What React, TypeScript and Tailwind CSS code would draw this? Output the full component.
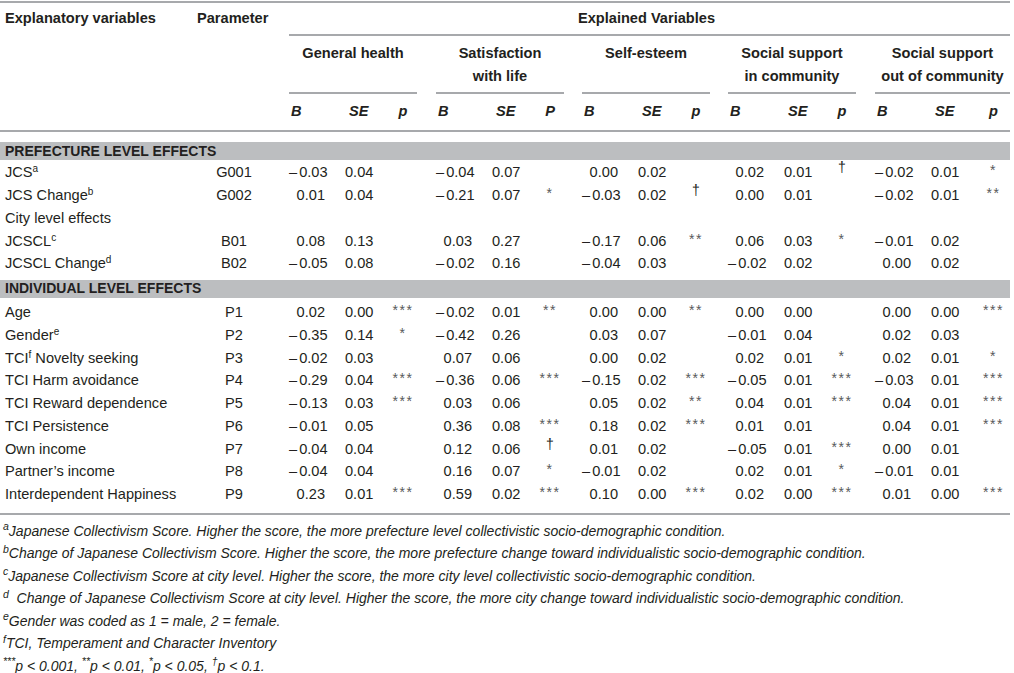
import React, { Fragment } from "react";

type Cell = [string, string, string];

const G = [
  { b: "w-[38px]", se: "w-[62px]", p: "w-[28px]", gap: "w-[19px]", span: "w-[128px]" },
  { b: "w-[38px]", se: "w-[62px]", p: "w-[28px]", gap: "w-[18px]", span: "w-[128px]" },
  { b: "w-[38px]", se: "w-[62px]", p: "w-[28px]", gap: "w-[18px]", span: "w-[128px]" },
  { b: "w-[38px]", se: "w-[62px]", p: "w-[28px]", gap: "w-[19px]", span: "w-[128px]" },
  { b: "w-[38px]", se: "w-[64px]", p: "w-[33px]", gap: "w-0", span: "w-[135px]" },
];

const groupTitles: React.ReactNode[] = [
  <>General health</>,
  <>
    Satisfaction
    <br />
    with life
  </>,
  <>Self-esteem</>,
  <>
    Social support
    <br />
    in community
  </>,
  <>
    Social support
    <br />
    out of community
  </>,
];

function Sig({ v }: { v: string }) {
  if (!v) return null;
  if (v === "†")
    return (
      <span className="inline-block -translate-y-[5px] text-[14px] leading-none text-[#231f20]">†</span>
    );
  return (
    <span className="inline-block -translate-y-[2px] text-[14px] leading-none tracking-[1.5px] text-[#58595b]">
      {v}
    </span>
  );
}

function Num({ v }: { v: string }) {
  if (v.startsWith("-")) {
    return (
      <>
        <span className="mr-[2px]">{"\u2013"}</span>
        {v.slice(1)}
      </>
    );
  }
  return <>{v}</>;
}

function DataRow({ label, param, vals }: { label: React.ReactNode; param: string; vals: Cell[] }) {
  return (
    <div className="flex h-[22.75px] items-center whitespace-nowrap">
      <div className="w-[195px] pl-[5px]">{label}</div>
      <div className="w-[94px] pr-[16px] text-center">{param}</div>
      {G.map((g, i) => (
        <Fragment key={i}>
          <div className={`${g.b} pr-[2px] text-right`}>
            <Num v={vals[i][0]} />
          </div>
          <div className={`${g.se} pl-[18px]`}>{vals[i][1]}</div>
          <div className={`${g.p} text-center`}>
            <Sig v={vals[i][2]} />
          </div>
          <div className={g.gap} />
        </Fragment>
      ))}
    </div>
  );
}

const S = ({ c }: { c: string }) => <sup className="text-[10px]">{c}</sup>;

const prefRows: { label: React.ReactNode; param: string; vals: Cell[] }[] = [
  {
    label: (
      <>
        JCS<S c="a" />
      </>
    ),
    param: "G001",
    vals: [
      ["-0.03", "0.04", ""],
      ["-0.04", "0.07", ""],
      ["0.00", "0.02", ""],
      ["0.02", "0.01", "†"],
      ["-0.02", "0.01", "*"],
    ],
  },
  {
    label: (
      <>
        JCS Change<S c="b" />
      </>
    ),
    param: "G002",
    vals: [
      ["0.01", "0.04", ""],
      ["-0.21", "0.07", "*"],
      ["-0.03", "0.02", "†"],
      ["0.00", "0.01", ""],
      ["-0.02", "0.01", "**"],
    ],
  },
];

const cityRows: { label: React.ReactNode; param: string; vals: Cell[] }[] = [
  {
    label: (
      <>
        JCSCL<S c="c" />
      </>
    ),
    param: "B01",
    vals: [
      ["0.08", "0.13", ""],
      ["0.03", "0.27", ""],
      ["-0.17", "0.06", "**"],
      ["0.06", "0.03", "*"],
      ["-0.01", "0.02", ""],
    ],
  },
  {
    label: (
      <>
        JCSCL Change<S c="d" />
      </>
    ),
    param: "B02",
    vals: [
      ["-0.05", "0.08", ""],
      ["-0.02", "0.16", ""],
      ["-0.04", "0.03", ""],
      ["-0.02", "0.02", ""],
      ["0.00", "0.02", ""],
    ],
  },
];

const indRows: { label: React.ReactNode; param: string; vals: Cell[] }[] = [
  {
    label: "Age",
    param: "P1",
    vals: [
      ["0.02", "0.00", "***"],
      ["-0.02", "0.01", "**"],
      ["0.00", "0.00", "**"],
      ["0.00", "0.00", ""],
      ["0.00", "0.00", "***"],
    ],
  },
  {
    label: (
      <>
        Gender<S c="e" />
      </>
    ),
    param: "P2",
    vals: [
      ["-0.35", "0.14", "*"],
      ["-0.42", "0.26", ""],
      ["0.03", "0.07", ""],
      ["-0.01", "0.04", ""],
      ["0.02", "0.03", ""],
    ],
  },
  {
    label: (
      <>
        TCI<S c="f" /> Novelty seeking
      </>
    ),
    param: "P3",
    vals: [
      ["-0.02", "0.03", ""],
      ["0.07", "0.06", ""],
      ["0.00", "0.02", ""],
      ["0.02", "0.01", "*"],
      ["0.02", "0.01", "*"],
    ],
  },
  {
    label: "TCI Harm avoidance",
    param: "P4",
    vals: [
      ["-0.29", "0.04", "***"],
      ["-0.36", "0.06", "***"],
      ["-0.15", "0.02", "***"],
      ["-0.05", "0.01", "***"],
      ["-0.03", "0.01", "***"],
    ],
  },
  {
    label: "TCI Reward dependence",
    param: "P5",
    vals: [
      ["-0.13", "0.03", "***"],
      ["0.03", "0.06", ""],
      ["0.05", "0.02", "**"],
      ["0.04", "0.01", "***"],
      ["0.04", "0.01", "***"],
    ],
  },
  {
    label: "TCI Persistence",
    param: "P6",
    vals: [
      ["-0.01", "0.05", ""],
      ["0.36", "0.08", "***"],
      ["0.18", "0.02", "***"],
      ["0.01", "0.01", ""],
      ["0.04", "0.01", "***"],
    ],
  },
  {
    label: "Own income",
    param: "P7",
    vals: [
      ["-0.04", "0.04", ""],
      ["0.12", "0.06", "†"],
      ["0.01", "0.02", ""],
      ["-0.05", "0.01", "***"],
      ["0.00", "0.01", ""],
    ],
  },
  {
    label: "Partner\u2019s income",
    param: "P8",
    vals: [
      ["-0.04", "0.04", ""],
      ["0.16", "0.07", "*"],
      ["-0.01", "0.02", ""],
      ["0.02", "0.01", "*"],
      ["-0.01", "0.01", ""],
    ],
  },
  {
    label: "Interdependent Happiness",
    param: "P9",
    vals: [
      ["0.23", "0.01", "***"],
      ["0.59", "0.02", "***"],
      ["0.10", "0.00", "***"],
      ["0.02", "0.00", "***"],
      ["0.01", "0.00", "***"],
    ],
  },
];

function Band({ children, className }: { children: React.ReactNode; className?: string }) {
  return (
    <div
      className={`flex h-[18px] w-[1010px] items-center bg-[#bcbec0] pl-[5px] text-[14px] font-bold ${className ?? ""}`}
    >
      {children}
    </div>
  );
}

export default function App() {
  return (
    <div
      className="h-[673px] w-[1014px] overflow-hidden bg-white text-[14.6px] text-[#231f20]"
      style={{ fontFamily: '"Liberation Sans", Arial, sans-serif' }}
    >
      {/* top rule */}
      <div className="mt-[1px] h-[2px] w-[1010px] bg-[#a7a9ac]" />

      {/* header row 1 */}
      <div className="flex h-[31px] items-center whitespace-nowrap font-bold">
        <div className="w-[195px] pl-[5px]">Explanatory variables</div>
        <div className="w-[94px] pl-[2px]">Parameter</div>
        <div className="w-[721px] pr-[6px] text-center">Explained Variables</div>
      </div>
      <div className="flex">
        <div className="w-[289px]" />
        <div className="h-[2px] w-[721px] bg-[#a7a9ac]" />
      </div>

      {/* group titles */}
      <div className="flex h-[58px] whitespace-nowrap font-bold">
        <div className="w-[289px]" />
        {G.map((g, i) => (
          <Fragment key={i}>
            <div className={`${g.span} border-b-2 border-[#a7a9ac] pt-[6px] text-center leading-[23px]`}>
              {groupTitles[i]}
            </div>
            <div className={g.gap} />
          </Fragment>
        ))}
      </div>

      {/* B SE p */}
      <div className="flex h-[36px] items-center whitespace-nowrap font-bold italic">
        <div className="w-[289px]" />
        {G.map((g, i) => (
          <Fragment key={i}>
            <div className={`${g.b} pl-[2px]`}>B</div>
            <div className={`${g.se} pl-[22px]`}>SE</div>
            <div className={`${g.p} text-center`}>{i === 1 ? "P" : "p"}</div>
            <div className={g.gap} />
          </Fragment>
        ))}
      </div>
      <div className="h-[2px] w-[1010px] bg-[#a7a9ac]" />

      {/* body */}
      <Band className="mt-[10px]">PREFECTURE LEVEL EFFECTS</Band>
      <div className="mt-[2px]">
        {prefRows.map((r, i) => (
          <DataRow key={i} {...r} />
        ))}
        <div className="flex h-[22.75px] items-center pl-[5px]">City level effects</div>
        {cityRows.map((r, i) => (
          <DataRow key={i} {...r} />
        ))}
      </div>
      <Band className="mt-[4px]">INDIVIDUAL LEVEL EFFECTS</Band>
      <div className="mt-[4px]">
        {indRows.map((r, i) => (
          <DataRow key={i} {...r} />
        ))}
      </div>
      <div className="mt-[6px] h-[2px] w-[1010px] bg-[#a7a9ac]" />

      {/* footnotes */}
      <div className="mt-[5px] pl-[3px] text-[14px] italic leading-[22.5px] whitespace-nowrap">
        <div>
          <sup>a</sup>Japanese Collectivism Score. Higher the score, the more prefecture level collectivistic
          socio-demographic condition.
        </div>
        <div>
          <sup>b</sup>Change of Japanese Collectivism Score. Higher the score, the more prefecture change toward
          individualistic socio-demographic condition.
        </div>
        <div>
          <sup>c</sup>Japanese Collectivism Score at city level. Higher the score, the more city level
          collectivistic socio-demographic condition.
        </div>
        <div>
          <sup>d</sup>&nbsp; Change of Japanese Collectivism Score at city level. Higher the score, the more city
          change toward individualistic socio-demographic condition.
        </div>
        <div>
          <sup>e</sup>Gender was coded as 1 = male, 2 = female.
        </div>
        <div>
          <sup>f</sup>TCI, Temperament and Character Inventory
        </div>
        <div>
          <sup>***</sup>p &lt; 0.001, <sup>**</sup>p &lt; 0.01, <sup>*</sup>p &lt; 0.05, <sup>†</sup>p &lt; 0.1.
        </div>
      </div>
    </div>
  );
}
